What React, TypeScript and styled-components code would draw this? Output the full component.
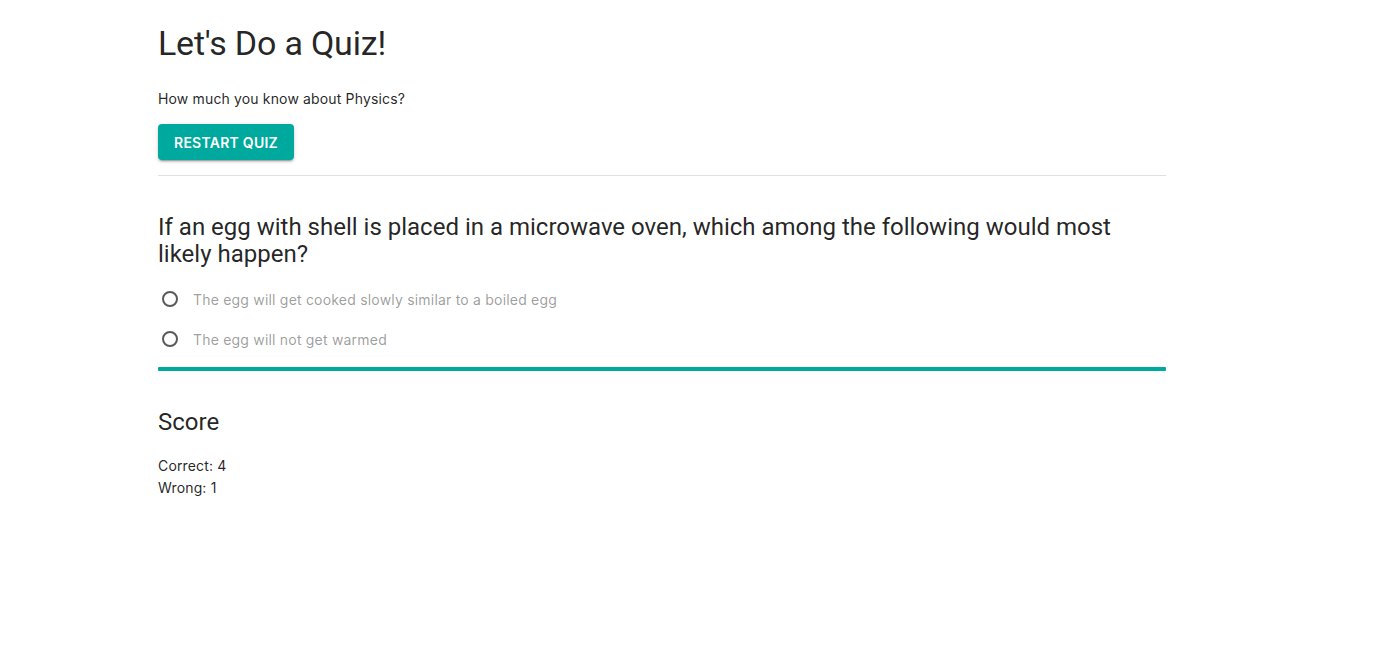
import React, { useState } from "react";
import styled, { createGlobalStyle } from "styled-components";

const GlobalStyle = createGlobalStyle`
  html, body { margin: 0; padding: 0; background: #fff; }
  body {
    font-family: Inter, "Noto Sans", "Liberation Sans", sans-serif;
    color: rgba(0, 0, 0, 0.87);
    -webkit-font-smoothing: antialiased;
  }
`;

const Page = styled.main`
  width: 1008px;
  margin-left: 158px;
  padding-top: 22px;
  display: flex;
  flex-direction: column;
`;

const Title = styled.h1`
  margin: 0;
  font-family: Roboto, Inter, sans-serif;
  font-size: 34px;
  font-weight: 400;
  line-height: 42px;
  letter-spacing: -0.2px;
`;

const Body = styled.p<{ $mt?: number }>`
  margin: ${(p) => p.$mt ?? 0}px 0 0;
  font-size: 14px;
  line-height: 22px;
  letter-spacing: 0.15px;
`;

const Button = styled.button`
  align-self: flex-start;
  margin-top: 14px;
  height: 36px;
  padding: 0 16px;
  white-space: nowrap;
  border: none;
  border-radius: 4px;
  background: #00a99d;
  color: #fff;
  font-family: inherit;
  font-size: 14px;
  font-weight: 600;
  letter-spacing: 0.25px;
  text-transform: uppercase;
  box-shadow: 0 3px 1px -2px rgba(0, 0, 0, 0.2), 0 2px 2px 0 rgba(0, 0, 0, 0.14),
    0 1px 5px 0 rgba(0, 0, 0, 0.12);
  cursor: pointer;
`;

const Divider = styled.hr`
  margin: 15px 0 0;
  border: none;
  height: 1px;
  background: #e0e0e0;
`;

const Question = styled.h2`
  margin: 38px 0 0;
  font-family: Roboto, Inter, sans-serif;
  font-size: 24px;
  font-weight: 400;
  line-height: 27px;
`;

const Options = styled.div`
  margin-top: 11px;
  display: flex;
  flex-direction: column;
`;

const Option = styled.label`
  display: flex;
  align-items: center;
  height: 40px;
  cursor: pointer;
`;

const RadioWrap = styled.span`
  width: 24px;
  height: 24px;
  margin-right: 11px;
  display: flex;
  align-items: center;
  justify-content: center;
`;

const Circle = styled.span<{ $checked: boolean }>`
  box-sizing: border-box;
  width: 16px;
  height: 16px;
  border-radius: 50%;
  border: 2px solid rgba(0, 0, 0, 0.65);
  background: ${(p) => (p.$checked ? "radial-gradient(circle, #00a99d 40%, transparent 45%)" : "transparent")};
`;

const OptionText = styled.span`
  font-size: 14px;
  letter-spacing: 0.2px;
  color: rgba(0, 0, 0, 0.4);
`;

const Progress = styled.div`
  margin-top: 8px;
  height: 4px;
  border-radius: 1px;
  background: #00a99d;
`;

const ScoreTitle = styled.h3`
  margin: 35px 0 0;
  font-family: Roboto, Inter, sans-serif;
  font-size: 24px;
  font-weight: 400;
  line-height: 32px;
`;

const options = [
  "The egg will get cooked slowly similar to a boiled egg",
  "The egg will not get warmed",
];

export default function App() {
  const [sel, setSel] = useState<number | null>(null);
  return (
    <>
      <GlobalStyle />
      <Page>
        <Title>Let's Do a Quiz!</Title>
        <Body $mt={24}>How much you know about Physics?</Body>
        <Button>Restart Quiz</Button>
        <Divider />
        <Question>
          If an egg with shell is placed in a microwave oven, which among the following would most likely happen?
        </Question>
        <Options>
          {options.map((o, i) => (
            <Option key={i} onClick={() => setSel(i)}>
              <RadioWrap>
                <Circle $checked={sel === i} />
              </RadioWrap>
              <OptionText>{o}</OptionText>
            </Option>
          ))}
        </Options>
        <Progress />
        <ScoreTitle>Score</ScoreTitle>
        <Body $mt={17}>Correct: 4</Body>
        <Body>Wrong: 1</Body>
      </Page>
    </>
  );
}
